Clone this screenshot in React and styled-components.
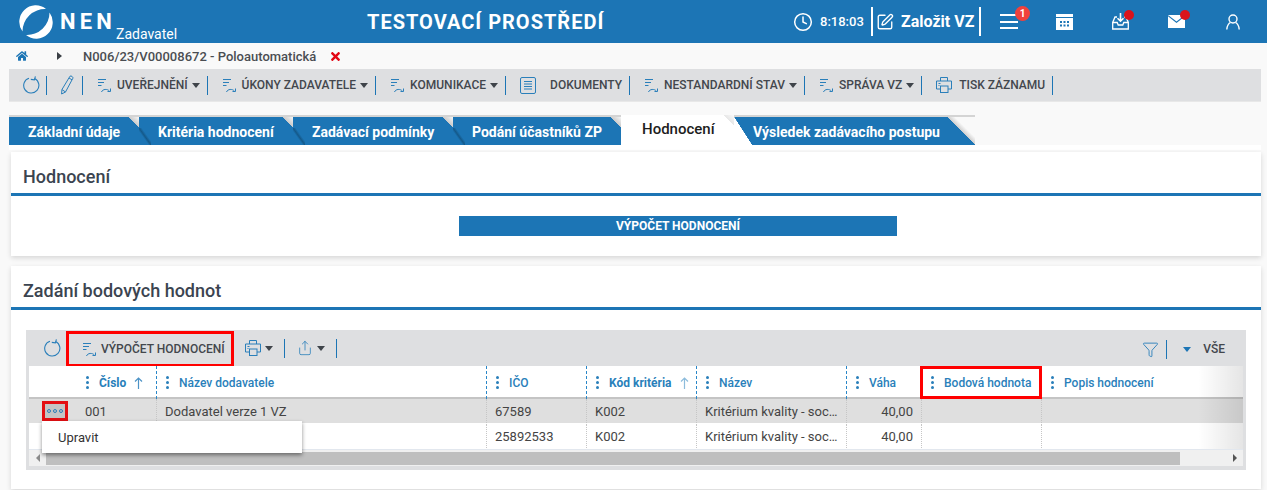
import React from "react";
import styled, { createGlobalStyle } from "styled-components";
import { Clock, SquarePen, Filter, Share } from "lucide-react";
import { FaHome, FaTimes } from "react-icons/fa";

const BLUE = "#1c75b5";
const TEXT = "#43474d";
const COLUMNS = "48px 80px 330px 100px 110px 150px 75px 120px 201px";

const GlobalStyle = createGlobalStyle`
  html, body {
    margin: 0;
    background: #f9f9f9;
    font-family: Roboto, "Liberation Sans", sans-serif;
    color: ${TEXT};
  }
  #root {
    height: 490px;
    overflow: hidden;
  }
`;

const ListIcon = () => (
  <svg width="15" height="16" viewBox="0 0 15 16" fill="none" stroke="#2a7fba" strokeWidth="1">
    <path d="M1 2.5h8M1 5.5h6M1 8.5h3.5" />
    <path d="M4.5 15c1-3 6-3.5 8-.8M13.5 11.5v3h-3" />
  </svg>
);

const RefreshIcon = () => (
  <svg width="18" height="18" viewBox="0 0 18 18" fill="none" stroke="#2a7fba" strokeWidth="1.1">
    <path d="M7 2.2A7.6 7.6 0 1 0 12.6 2.6" />
    <path d="M13.4 0.3 12.4 3.8 8.8 3.4" />
  </svg>
);

const PencilIcon = () => (
  <svg width="14" height="20" viewBox="0 0 14 20" fill="none" stroke="#2a7fba" strokeWidth="1">
    <path d="M10 1.2c1-.8 3.4.6 2.9 2L5.5 17 1.6 19l.3-4.4z" />
    <path d="M9 3l3 1.8M2 14.6l3.5 2.4" />
  </svg>
);

const DocIcon = () => (
  <svg width="16" height="17" viewBox="0 0 16 17" fill="none" stroke="#2a7fba" strokeWidth="1">
    <rect x="0.5" y="0.5" width="15" height="16" rx="1.5" />
    <path d="M4 4.5h8M4 7h8M4 9.5h8M4 12h8" />
  </svg>
);

const PrintIcon = () => (
  <svg width="16" height="16" viewBox="0 0 16 16" fill="none" stroke="#2a7fba" strokeWidth="1">
    <path d="M4.5 4V.5h7V4" />
    <path d="M4 12H.5V4h15v8H12" />
    <rect x="4.5" y="9" width="7.5" height="6.5" />
    <path d="M2.5 6.5h2M2.5 8.5h1" />
  </svg>
);

const CalendarIcon = () => (
  <svg width="17" height="16" viewBox="0 0 17 16" fill="#fff">
    <rect x="0" y="0" width="17" height="3" />
    <rect x="0" y="4" width="17" height="12" />
    <g fill={BLUE}>
      <rect x="4" y="7" width="2" height="2" />
      <rect x="7.5" y="7" width="2" height="2" />
      <rect x="11" y="7" width="2" height="2" />
      <rect x="4" y="10.5" width="2" height="2" />
      <rect x="7.5" y="10.5" width="2" height="2" />
      <rect x="11" y="10.5" width="2" height="2" />
    </g>
  </svg>
);

const InboxIcon = () => (
  <svg width="17" height="17" viewBox="0 0 17 17" fill="none" stroke="#fff" strokeWidth="1.3">
    <path d="M5 4H3L.7 9.5V16h15.6V9.5L14 4h-2" />
    <path d="M.7 9.5h4.5l1 2.5h4.6l1-2.5h4.5" />
    <path d="M8.5 0v8M5.5 5.2l3 3 3-3" strokeWidth="1.6" />
  </svg>
);

const MailIcon = () => (
  <svg width="17" height="13" viewBox="0 0 17 13">
    <path d="M0 0h17v13H0z" fill="#fff" />
    <path d="M0 .6l8.5 6.6L17 .6" fill="none" stroke={BLUE} strokeWidth="1.2" />
  </svg>
);

const UserIcon = () => (
  <svg width="14" height="16" viewBox="0 0 14 16" fill="none" stroke="#fff" strokeWidth="1.4">
    <circle cx="7" cy="5" r="4" />
    <path d="M.8 15.6c0-4 2.4-6.6 3.6-7M13.2 15.6c0-4-2.4-6.6-3.6-7" />
  </svg>
);

const Logo = () => (
  <svg width="34" height="34" viewBox="0 0 34 34" fill="#fff">
    <path d="M27 4A16.4 16.4 0 0 0 3.5 26.5 22.4 22.4 0 0 1 27 4z" />
    <path d="M27 4A16.4 16.4 0 0 0 3.5 26.5 22.4 22.4 0 0 1 27 4z" transform="rotate(180 17 17)" />
  </svg>
);

const SortIcon = ({ $light }) => (
  <svg width="9" height="12" viewBox="0 0 9 12" fill="none" stroke={$light ? "#8dbcdc" : "#4d93c6"} strokeWidth="1.2">
    <path d="M4.5 12V1M1 4.5 4.5 1 8 4.5" />
  </svg>
);

const toolbar = [
  { label: "UVEŘEJNĚNÍ", caret: true },
  { label: "ÚKONY ZADAVATELE", caret: true },
  { label: "KOMUNIKACE", caret: true },
  { label: "DOKUMENTY", icon: "doc" },
  { label: "NESTANDARDNÍ STAV", caret: true },
  { label: "SPRÁVA VZ", caret: true },
  { label: "TISK ZÁZNAMU", icon: "print" },
];

const tabs = [
  { label: "Základní údaje", width: 130 },
  { label: "Kritéria hodnocení", width: 154 },
  { label: "Zadávací podmínky", width: 160 },
  { label: "Podání účastníků ZP", width: 168 },
  { label: "Hodnocení", width: 113, active: true },
  { label: "Výsledek zadávacího postupu", width: 241, afterActive: true, last: true },
];

const headers = [
  { label: "" },
  { label: "Číslo", sort: true, dashed: true, strong: true },
  { label: "Název dodavatele", dashed: true },
  { label: "IČO", dashed: true },
  { label: "Kód kritéria", sort: true, dashed: true, strong: true, lightSort: true },
  { label: "Název", dashed: true },
  { label: "Váha", dashed: true },
  { label: "Bodová hodnota", marked: true },
  { label: "Popis hodnocení" },
];

const rows = [
  ["001", "Dodavatel verze 1 VZ", "67589", "K002", "Kritérium kvality - soc…", "40,00"],
  ["", "", "25892533", "K002", "Kritérium kvality - soc…", "40,00"],
];

export default function App() {
  return (
    <>
      <GlobalStyle />
      <Header>
        <Brand>
          <Logo />
          <BrandName>NEN</BrandName>
          <BrandRole>Zadavatel</BrandRole>
        </Brand>
        <EnvTitle>TESTOVACÍ PROSTŘEDÍ</EnvTitle>
        <HeaderTools>
          <Clock size={20} strokeWidth={1.8} />
          <Time>8:18:03</Time>
          <CreateButton>
            <SquarePen size={18} strokeWidth={1.8} />
            <span>Založit VZ</span>
          </CreateButton>
          <HeaderIcon $left={19} $width={18}>
            <Burger><i /><i /><i /></Burger>
            <CountBadge>1</CountBadge>
          </HeaderIcon>
          <HeaderIcon $left={38} $width={17}><CalendarIcon /></HeaderIcon>
          <HeaderIcon $left={39} $width={17}>
            <InboxIcon />
            <Dot />
          </HeaderIcon>
          <HeaderIcon $left={39} $width={17}>
            <MailIcon />
            <Dot />
          </HeaderIcon>
          <HeaderIcon $left={41} $width={14}><UserIcon /></HeaderIcon>
        </HeaderTools>
      </Header>

      <Breadcrumb>
        <FaHome size={12} color={BLUE} />
        <CrumbArrow />
        <CrumbText>N006/23/V00008672 - Poloautomatická</CrumbText>
        <FaTimes size={13} color="#e30613" />
      </Breadcrumb>

      <MainToolbar>
        <ToolIcon $pad={13} $right={6}><RefreshIcon /></ToolIcon>
        <ToolIcon $pad={13} $right={8}><PencilIcon /></ToolIcon>
        {toolbar.map((item) => (
          <ToolItem key={item.label}>
            {item.icon === "doc" ? <DocIcon /> : item.icon === "print" ? <PrintIcon /> : <ListIcon />}
            <ToolLabel $gap={item.icon === "doc" ? 14 : item.icon === "print" ? 7 : 5}>{item.label}</ToolLabel>
            {item.caret && <Caret />}
          </ToolItem>
        ))}
      </MainToolbar>

      <TabRow>
        {tabs.map((tab) => (
          <Tab
            key={tab.label}
            $width={tab.width}
            $active={tab.active}
            $afterActive={tab.afterActive}
            $last={tab.last}
          >
            {tab.label}
          </Tab>
        ))}
      </TabRow>
      <TabStrip />

      <Panel>
        <PanelTitle>Hodnocení</PanelTitle>
        <PanelBody>
          <WideButton>VÝPOČET HODNOCENÍ</WideButton>
        </PanelBody>
      </Panel>

      <Panel $gap>
        <PanelTitle>Zadání bodových hodnot</PanelTitle>
        <GridBody>
          <DataGrid>
            <GridToolbar>
              <GridRefresh><RefreshIcon /></GridRefresh>
              <MarkedAction>
                <ListIcon />
                <span>VÝPOČET HODNOCENÍ</span>
              </MarkedAction>
              <GridMenu $left={11}><PrintIcon /><Caret /></GridMenu>
              <GridMenu $left={12}><Share size={16} strokeWidth={1.2} color="#2a7fba" /><Caret /></GridMenu>
              <GridRight>
                <Filter size={17} strokeWidth={1.3} color="#2a7fba" />
                <RightDivider />
                <BlueCaret />
                <ToolLabel $gap={6}>VŠE</ToolLabel>
              </GridRight>
            </GridToolbar>

            <TableWrap>
              <HeadRow>
                {headers.map((col, i) => (
                  <HeadCell key={i} $dashed={col.dashed} $marked={col.marked}>
                    {col.label && <DragDots><i /><i /><i /></DragDots>}
                    <HeadLabel $strong={col.strong}>{col.label}</HeadLabel>
                    {col.sort && <SortSlot><SortIcon $light={col.lightSort} /></SortSlot>}
                  </HeadCell>
                ))}
              </HeadRow>
              {rows.map((row, r) => (
                <BodyRow key={r} $selected={r === 0}>
                  <ActionCell>
                    {r === 0 && <DotsButton><b /><b /><b /></DotsButton>}
                  </ActionCell>
                  {row.map((value, c) => (
                    <BodyCell key={c} $right={c === 5}>
                      <CellText>{value}</CellText>
                    </BodyCell>
                  ))}
                  <BodyCell />
                  <BodyCell $last />
                </BodyRow>
              ))}
              <RightFade />
            </TableWrap>

            <ScrollBar>
              <ScrollArrow $dir="left" />
              <ScrollThumb />
              <ScrollArrow $dir="right" />
            </ScrollBar>

            <RowMenu>Upravit</RowMenu>
          </DataGrid>
        </GridBody>
      </Panel>
    </>
  );
}

const Header = styled.header`
  height: 43px;
  background: ${BLUE};
  color: #fff;
  display: flex;
  align-items: center;
  padding-left: 19px;
`;
const Brand = styled.div`
  display: flex;
  align-items: center;
  width: 348px;
`;
const BrandName = styled.span`
  margin-left: 7px;
  font-size: 22px;
  font-weight: 700;
  letter-spacing: 4.2px;
  margin-top: -1px;
`;
const BrandRole = styled.span`
  font-size: 14px;
  margin-top: 24px;
  line-height: 16px;
`;
const EnvTitle = styled.div`
  font-size: 20px;
  font-weight: 700;
  letter-spacing: 1px;
  width: 426px;
  white-space: nowrap;
`;
const HeaderTools = styled.div`
  display: flex;
  align-items: center;
`;
const Time = styled.span`
  font-size: 13px;
  font-weight: 500;
  margin-left: 7px;
  width: 51px;
`;
const CreateButton = styled.div`
  display: flex;
  align-items: center;
  gap: 7px;
  height: 29px;
  width: 110px;
  box-sizing: border-box;
  border-left: 2px solid #fff;
  border-right: 2px solid #fff;
  padding-left: 3px;
  font-size: 16px;
  font-weight: 700;
  white-space: nowrap;
`;
const HeaderIcon = styled.div`
  position: relative;
  display: flex;
  align-items: center;
  justify-content: center;
  margin-left: ${(p) => p.$left}px;
  width: ${(p) => p.$width}px;
  height: 20px;
`;
const Burger = styled.div`
  display: flex;
  flex-direction: column;
  gap: 4.5px;
  width: 18px;
  i {
    display: block;
    height: 2px;
    background: #fff;
  }
`;
const CountBadge = styled.span`
  position: absolute;
  top: -6px;
  left: 15px;
  width: 15px;
  height: 15px;
  border-radius: 50%;
  background: #f0413c;
  font-size: 10px;
  font-weight: 700;
  line-height: 15px;
  text-align: center;
`;
const Dot = styled.span`
  position: absolute;
  top: -2px;
  right: -5px;
  width: 10px;
  height: 10px;
  border-radius: 50%;
  background: #d9131c;
`;

const Breadcrumb = styled.nav`
  height: 26px;
  display: flex;
  align-items: center;
  padding-left: 16px;
`;
const CrumbArrow = styled.span`
  margin-left: 29px;
  border-left: 5px solid #3a3f45;
  border-top: 4px solid transparent;
  border-bottom: 4px solid transparent;
`;
const CrumbText = styled.span`
  margin-left: 21px;
  margin-right: 13px;
  font-size: 13px;
  font-weight: 500;
  color: #4a4d52;
`;

const MainToolbar = styled.div`
  height: 33px;
  margin: 0 6px 0 9px;
  background: #dedfe1;
  border-bottom: 1px solid #e8e8e8;
  box-sizing: border-box;
  display: flex;
  align-items: center;
`;
const ToolIcon = styled.div`
  display: flex;
  align-items: center;
  height: 19px;
  padding: 0 ${(p) => p.$right}px 0 ${(p) => p.$pad}px;
  border-right: 1px solid ${BLUE};
`;
const ToolItem = styled.div`
  display: flex;
  align-items: center;
  height: 19px;
  padding: 0 7px 0 14px;
  border-right: 1px solid ${BLUE};
`;
const ToolLabel = styled.span`
  margin-left: ${(p) => p.$gap}px;
  font-size: 12px;
  font-weight: 500;
  color: ${TEXT};
  white-space: nowrap;
`;
const Caret = styled.span`
  margin-left: 4px;
  border-top: 5px solid #3f444a;
  border-left: 4px solid transparent;
  border-right: 4px solid transparent;
`;

const TabRow = styled.div`
  height: 30px;
  margin: 13px 0 0 9px;
  display: flex;
  align-items: flex-end;
`;
const Tab = styled.div`
  position: relative;
  flex: none;
  box-sizing: border-box;
  width: ${(p) => p.$width}px;
  height: ${(p) => (p.$active ? 30 : 28)}px;
  padding: ${(p) => (p.$active ? "6px 0 0 21px" : "7px 0 0 19px")};
  background: ${(p) => (p.$active ? "#fff" : BLUE)};
  color: ${(p) => (p.$active ? "#1d1d1d" : "#fff")};
  font-size: ${(p) => (p.$active ? 15 : 14)}px;
  font-weight: ${(p) => (p.$active ? 500 : 700)};
  line-height: 16px;
  white-space: nowrap;
  box-shadow: ${(p) => (p.$active ? "none" : "0 -2px 0 #d4d4d4")};

  /* folded corner */
  &::after {
    content: "";
    position: absolute;
    top: 0;
    right: 0;
    width: ${(p) => (p.$last ? 28 : 11)}px;
    height: ${(p) => (p.$last ? 28 : 11)}px;
    background: ${(p) =>
      p.$last
        ? "linear-gradient(225deg, #f9f9f9 0, #f9f9f9 36%, #cfcfcf 49%, transparent 50%)"
        : p.$active
          ? "linear-gradient(225deg, #f9f9f9 0, #e6e6e6 49%, transparent 50%)"
          : "linear-gradient(225deg, #f7f7f7 0, #c9c9c9 49%, transparent 50%)"};
  }

  /* fold shadow thrown on the neighbour, white wedge after the active tab */
  &::before {
    content: "";
    position: absolute;
    left: 0;
    display: ${(p) => (p.$active ? "none" : "block")};
    top: ${(p) => (p.$afterActive ? 0 : 11)}px;
    width: ${(p) => (p.$afterActive ? 18 : 12)}px;
    height: ${(p) => (p.$afterActive ? 28 : 17)}px;
    background: ${(p) =>
      p.$afterActive
        ? "linear-gradient(to top right, #fff 50%, transparent 51%)"
        : `linear-gradient(to top right, ${BLUE} 40%, #14598a 50%, ${BLUE} 62%)`};
  }
  &:first-child::before {
    display: none;
  }
`;
const TabStrip = styled.div`
  height: 5px;
  margin: 0 6px 2px 9px;
  background: #fff;
`;

const Panel = styled.section`
  margin: ${(p) => (p.$gap ? "10px" : "0")} 6px 0 11px;
  background: #fff;
  box-shadow: 0 2px 5px rgba(0, 0, 0, 0.14);
`;
const PanelTitle = styled.h2`
  margin: 0;
  height: 41px;
  box-sizing: content-box;
  padding-left: 12px;
  border-bottom: 3px solid ${BLUE};
  font-size: 18px;
  font-weight: 500;
  line-height: 50px;
  color: #3b4450;
`;
const PanelBody = styled.div`
  padding: 20px 0 20px 448px;
  display: flex;
`;
const WideButton = styled.button`
  width: 438px;
  height: 20px;
  border: none;
  padding: 0;
  background: ${BLUE};
  color: #fff;
  font-family: inherit;
  font-size: 12px;
  font-weight: 700;
`;

const GridBody = styled.div`
  padding: 20px 15px 19px;
`;
const DataGrid = styled.div`
  position: relative;
  background: #dedfe1;
  padding: 0 3px 4px;
`;
const GridToolbar = styled.div`
  height: 36px;
  display: flex;
  align-items: center;
`;
const GridRefresh = styled.div`
  display: flex;
  margin-left: 14px;
  width: 23px;
`;
const MarkedAction = styled.div`
  display: flex;
  align-items: center;
  align-self: flex-start;
  box-sizing: border-box;
  width: 168px;
  height: 36px;
  margin-top: 1px;
  padding-left: 13px;
  border: 3px solid #f00;
  span {
    margin-left: 4px;
    font-size: 12px;
    font-weight: 500;
    color: ${TEXT};
    white-space: nowrap;
  }
`;
const GridMenu = styled.div`
  display: flex;
  align-items: center;
  height: 19px;
  margin-left: ${(p) => p.$left}px;
  padding-right: 11px;
  border-right: 1px solid ${BLUE};
`;
const GridRight = styled.div`
  margin-left: auto;
  display: flex;
  align-items: center;
  padding: 2px 18px 0 0;
`;
const RightDivider = styled.span`
  width: 1px;
  height: 19px;
  margin: 0 16px 0 7px;
  background: ${BLUE};
`;
const BlueCaret = styled.span`
  margin-right: 6px;
  border-top: 5px solid ${BLUE};
  border-left: 4px solid transparent;
  border-right: 4px solid transparent;
`;

const TableWrap = styled.div`
  position: relative;
  background: #fff;
  border-bottom: 1px solid #e2e7ee;
`;
const HeadRow = styled.div`
  display: grid;
  grid-template-columns: ${COLUMNS};
  height: 33px;
  box-sizing: border-box;
  border-bottom: 2px solid #c4c4c4;
`;
const HeadCell = styled.div`
  position: relative;
  display: flex;
  align-items: center;
  padding-left: 9px;
  border-right: 1px dashed ${(p) => (p.$dashed ? "#2a87c8" : "transparent")};
  margin-bottom: -2px;
  &::after {
    content: "";
    display: ${(p) => (p.$marked ? "block" : "none")};
    position: absolute;
    inset: 0 -1px 0 -2px;
    border: 3px solid #f00;
  }
`;
const DragDots = styled.span`
  display: flex;
  flex-direction: column;
  gap: 2px;
  width: 3px;
  margin-right: 10px;
  i {
    width: 3px;
    height: 3px;
    border-radius: 50%;
    background: #2a7fba;
  }
`;
const HeadLabel = styled.span`
  font-size: 12px;
  font-weight: ${(p) => (p.$strong ? 700 : 500)};
  color: #2a7fba;
  white-space: nowrap;
`;
const SortSlot = styled.span`
  display: flex;
  margin-left: 8px;
`;
const BodyRow = styled.div`
  display: grid;
  grid-template-columns: ${COLUMNS};
  height: 25px;
  box-sizing: border-box;
  border-bottom: 1px solid #fff;
  background: ${(p) => (p.$selected ? "#dfdfdf" : "#fff")};
`;
const ActionCell = styled.div`
  display: flex;
  align-items: center;
  padding-left: 13px;
`;
const DotsButton = styled.div`
  box-sizing: border-box;
  display: flex;
  align-items: center;
  justify-content: center;
  gap: 2px;
  width: 26px;
  height: 20px;
  border: 3px solid #e30f13;
  background: #c5c5c5;
  b {
    width: 4px;
    height: 4px;
    box-sizing: border-box;
    border: 1px solid #2a7fba;
    border-radius: 50%;
  }
`;
const BodyCell = styled.div`
  display: flex;
  align-items: center;
  min-width: 0;
  box-sizing: border-box;
  padding: 0 8px;
  justify-content: ${(p) => (p.$right ? "flex-end" : "flex-start")};
  border-right: 1px dotted ${(p) => (p.$last ? "transparent" : "#c6c6c6")};
`;
const CellText = styled.span`
  font-size: 13px;
  color: #444;
  white-space: nowrap;
`;
const RightFade = styled.div`
  position: absolute;
  top: 0;
  right: 0;
  bottom: 0;
  width: 45px;
  background: linear-gradient(to right, rgba(0, 0, 0, 0), rgba(0, 0, 0, 0.1));
  pointer-events: none;
`;

const ScrollBar = styled.div`
  height: 16px;
  background: #f0f0f0;
  display: flex;
  align-items: center;
`;
const ScrollArrow = styled.span`
  flex: none;
  width: 17px;
  display: flex;
  justify-content: center;
  &::before {
    content: "";
    border-top: 4px solid transparent;
    border-bottom: 4px solid transparent;
    ${(p) =>
      p.$dir === "left" ? "border-right: 4px solid #8a8a8a;" : "border-left: 4px solid #555;"}
  }
`;
const ScrollThumb = styled.div`
  width: 1134px;
  height: 13px;
  background: #bfbfbf;
  margin-right: auto;
`;

const RowMenu = styled.div`
  position: absolute;
  left: 16px;
  top: 91px;
  width: 260px;
  height: 32px;
  box-sizing: border-box;
  padding-left: 16px;
  background: #fff;
  box-shadow: 0 2px 4px rgba(0, 0, 0, 0.45);
  font-size: 13px;
  line-height: 34px;
  color: #333;
`;
